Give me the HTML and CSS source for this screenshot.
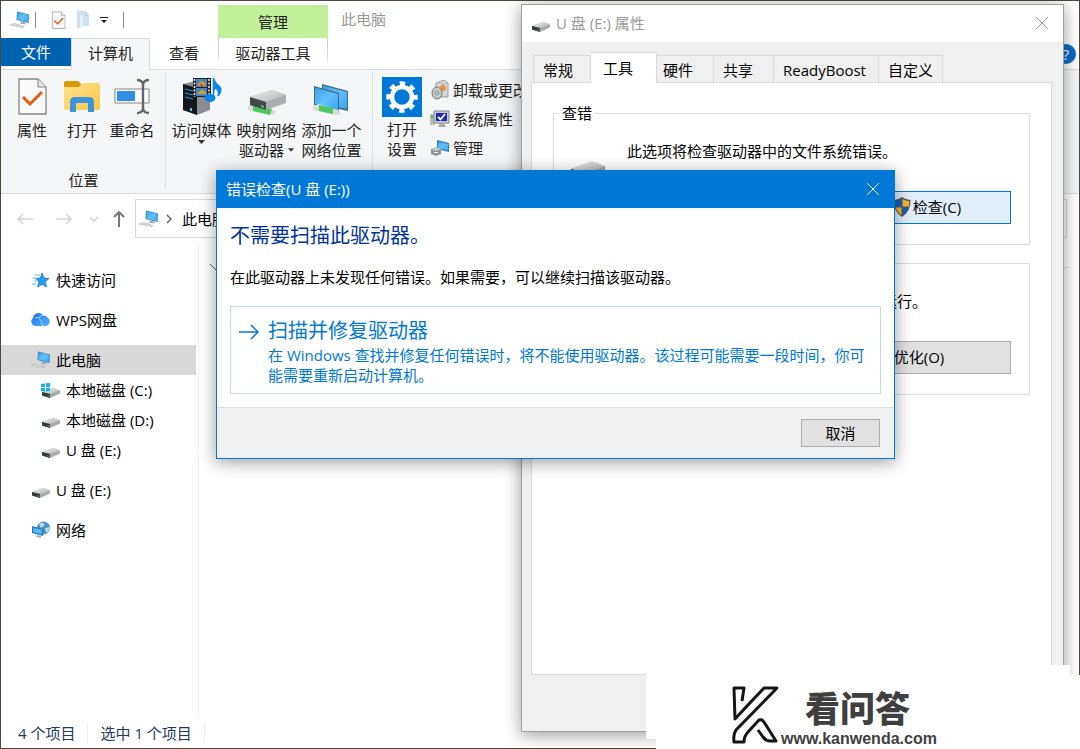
FILE: index.html
```html
<!DOCTYPE html>
<html lang="zh-CN">
<head>
<meta charset="utf-8">
<meta name="viewport" content="width=device-width, initial-scale=1">
<title>此电脑</title>
<link rel="stylesheet" href="styles.css">
</head>
<body class="desktop">
<svg class="defs" aria-hidden="true">
  <defs>
    <linearGradient id="screen" x1="0" y1="0" x2="1" y2="1"><stop offset="0" stop-color="#3aa0e8"/><stop offset=".5" stop-color="#62c0fb"/><stop offset="1" stop-color="#36a5f0"/></linearGradient>
    <linearGradient id="metal" x1="0" y1="0" x2="1" y2="1"><stop offset="0" stop-color="#f0f0f0"/><stop offset="1" stop-color="#aeb0b2"/></linearGradient>
    <linearGradient id="folder" x1="0" y1="0" x2="1" y2="1"><stop offset="0" stop-color="#ffe08a"/><stop offset="1" stop-color="#f9c84a"/></linearGradient>
    <linearGradient id="cloud" x1="0" y1="0" x2="1" y2="1"><stop offset="0" stop-color="#1b6ff2"/><stop offset="1" stop-color="#58b4fb"/></linearGradient>
    <symbol id="pc" viewBox="0 0 20 18">
      <path d="M7 0.500 19 3.500 18.500 12 6.500 9z" fill="#2f80b8"/><path d="M7.500 1.300 18.300 4 17.900 11.200 7.300 8.500z" fill="url(#screen)"/>
      <path d="M11 10.500 15 11.500 16 13.500 10 12.500z" fill="#9ba3a8"/>
      <path d="M0 14 4 12.500 12 14.500 9 16z" fill="#d5d8da" stroke="#b8bcbf" stroke-width=".6"/><path d="M11 16.500 14 15.500" stroke="#b0b4b7" stroke-width="1.200"/>
    </symbol>
    <symbol id="drive" viewBox="0 0 20 12">
      <path d="M1 5 12 1 19 3.500 19 6.500 9 11 1 8.500z" fill="#a7a9ab"/><path d="M1 5 12 1 19 3.500 9 7z" fill="url(#metal)"/>
      <path d="M1 5 9 7 9 11 1 8.500z" fill="#34383a"/><path d="M6.500 8.200 8.500 8.700V9.800L6.500 9.200z" fill="#35c765"/>
    </symbol>
    <symbol id="check" viewBox="0 0 30 38">
      <path d="M2 2H21L29 10V37H2z" fill="#fafafa" stroke="#858585" stroke-width="1.300"/><path d="M21 2V10H29" fill="#e6e6e6" stroke="#858585"/><path d="M6 20 13 27 25 15" fill="none" stroke="#ea5a17" stroke-width="3"/>
    </symbol>
  </defs>
</svg>

<main class="explorer">
  <header class="header">
    <div class="quick">
      <svg class="i20" viewBox="0 0 20 18"><use href="#pc"/></svg>
      <i class="bar"></i>
      <button class="plain" aria-label="属性"><svg width="15" height="18" viewBox="0 0 30 38"><use href="#check"/></svg></button>
      <button class="plain" aria-label="新建文件夹"><svg width="12" height="17" viewBox="0 0 12 17"><path d="M0 0H8L12 4V15H6L3 17H0z" fill="#cfe0f1"/><path d="M3 4H6V15L3 17z" fill="#e7f0f8"/><path d="M8 0V5H12" fill="#bfd6ec"/></svg></button>
      <button class="plain" aria-label="自定义快速访问工具栏"><svg width="8" height="6" viewBox="0 0 8 6"><path d="M0 0H8V1H0zM1 3H7L4 6z" fill="#222"/></svg></button>
      <i class="bar"></i>
    </div>
    <div class="context">管理</div>
    <h1 class="caption">此电脑</h1>
    <button class="tab file">文件</button>
    <button class="tab active">计算机</button>
    <button class="tab">查看</button>
    <button class="tab tools">驱动器工具</button>
    <div class="help-slot"><button class="help" aria-label="帮助">?</button></div>
  </header>

  <section class="ribbon">
    <div class="group place">
      <div class="tools-row">
        <button class="big"><svg width="30" height="38" viewBox="0 0 30 38"><use href="#check"/></svg>属性</button>
        <button class="big"><svg width="38" height="38" viewBox="0 0 38 38"><path d="M1 6Q1 4 3 4H15L18 7V11H1z" fill="#d99a07"/><path d="M1 10H16L20 6H35Q37 6 37 8V31Q37 33 35 33H3Q1 33 1 31z" fill="url(#folder)"/><path d="M7 35V25Q7 20 12 20H26Q31 20 31 25V35H25V26H13V35z" fill="#3b94dc"/></svg>打开</button>
        <button class="big"><svg width="38" height="38" viewBox="0 0 38 38"><path d="M2 12H36V26H2z" fill="#fff" stroke="#858585"/><path d="M4 14H22V24H4z" fill="#2f8fe3"/><path d="M24 3Q29 3 30 7Q31 3 36 3M30 5V34M24 36Q29 36 30 32Q31 36 36 36" fill="none" stroke="#666" stroke-width="2.400"/></svg>重命名</button>
      </div>
      <span class="group-name">位置</span>
    </div>
    <div class="group network">
      <div class="tools-row">
        <button class="big"><svg width="40" height="38" viewBox="0 0 40 38"><path d="M1 7 13 4 28 8V33L15 38 1 33z" fill="#8a8e92"/><path d="M1 7 15 11V38L1 33z" fill="#14181c"/><path d="M3 12 11 14M3 16 11 18M3 20 11 22" stroke="#2695f0"/><path d="M9 31V34" stroke="#4cf" stroke-width="2"/><path d="M11 1H29V20H11z" fill="#222"/><path d="M14 2H25V10H14zM14 11H25V19H14z" fill="#4b7fc8"/><path d="M15 8 19 4 24 6 22 10zM15 17 20 12 25 17z" fill="#c9a52e"/><path d="M18 6 22 9 19 10z" fill="#b5402c"/><path d="M12.500 2V20M27 2V20" stroke="#eee" stroke-width="1.500" stroke-dasharray="2 1.500"/><ellipse cx="28" cy="21" rx="5.500" ry="4" fill="#0c86e4"/><path d="M31.500 21V1Q33 7 37 9Q41 13 36 19Q38 13 33 11" fill="#0c86e4" stroke="#0c86e4" stroke-width="1.500"/></svg>访问媒体<svg width="7" height="4" viewBox="0 0 7 4"><path d="M0 0H7L3.500 4z" fill="#333"/></svg></button>
        <button class="big"><svg width="42" height="38" viewBox="0 0 42 38"><path d="M2 29 8 27 30 34 28 38 20 37 2 33z" fill="#d6dcd8"/><path d="M7 27 26 32 24 38 7 34z" fill="#4bc95c"/><path d="M4 20 26 13 40 18V26L20 33 4 28z" fill="#aaadaf"/><path d="M4 20 26 13 40 18 20 25z" fill="url(#metal)"/><path d="M4 20 20 25V33L4 28z" fill="#45494b"/><path d="M15 28 18 29V31L15 30z" fill="#40d660"/></svg>映射网络<span class="with-arrow">驱动器<svg width="6" height="4" viewBox="0 0 7 4"><path d="M0 0H7L3.500 4z" fill="#333"/></svg></span></button>
        <button class="big"><svg width="38" height="38" viewBox="0 0 38 38"><path d="M9 7 35 14V34L9 28z" fill="#3d6a86"/><path d="M10 8.500 34 15V32L10 27z" fill="url(#screen)"/><path d="M1 9 26 16V35L1 28z" fill="#3d6a86"/><path d="M2 10.500 25 17V33.500L2 27z" fill="url(#screen)"/><path d="M0 29 6 27 28 34 26 38 18 37 0 33z" fill="#d6dcd8"/><path d="M6 28 20 31 20 37 6 34z" fill="#4bc95c"/></svg>添加一个<span>网络位置</span></button>
      </div>
    </div>
    <div class="group system">
      <button class="big"><svg class="gear" width="40" height="40" viewBox="0 0 40 40"><path fill="#0078d7" d="M0 0H40V40H0z"/><circle cx="20" cy="20" r="13.500" fill="none" stroke="#fff" stroke-width="4.500" stroke-dasharray="5.300 5.303" stroke-dashoffset="2.650"/><circle cx="20" cy="20" r="10" fill="none" stroke="#fff" stroke-width="4.500"/></svg>打开<span>设置</span></button>
      <div class="small-list">
        <button class="small"><svg class="i20" viewBox="0 0 20 20"><path d="M6 3 14 0 18 3V17H6z" fill="#d8d8d4" stroke="#999"/><path d="M6 3 14 5 18 3" fill="#bbb"/><circle cx="13" cy="8" r="3" fill="#ee9138"/><ellipse cx="7" cy="13" rx="5" ry="6" fill="#c3c9c9" stroke="#777"/><circle cx="7" cy="13" r="1.500" fill="#fff" stroke="#777"/></svg>卸载或更改程序</button>
        <button class="small"><svg class="i20" viewBox="0 0 20 20"><path d="M0 5H5V16H0z" fill="#bbb"/><path d="M1 7H3V9H1z" fill="#2c4"/><path d="M4 2H19V14H4z" fill="#c9ccce" stroke="#888"/><path d="M6 4H17V12H6z" fill="#1b29c4"/><path d="M8 8 10.500 10.500 15 5" fill="none" stroke="#fff" stroke-width="1.800"/><path d="M10 14H14L16 18H8z" fill="#aaa"/></svg>系统属性</button>
        <button class="small"><svg class="i20" viewBox="0 0 20 20"><path d="M7 2 19 5V14L7 11z" fill="#2f80b8"/><path d="M8 3.500 18 6V12.500L8 10z" fill="url(#screen)"/><path d="M1 11 6 9 11 11V16L6 18 1 16z" fill="#8e9498"/><path d="M1 11 6 9 11 11 6 13z" fill="#c4c9cc"/><path d="M4 14.500H8" stroke="#eee"/></svg>管理</button>
      </div>
    </div>
  </section>

  <nav class="nav">
    <button class="plain" aria-label="后退"><svg width="16" height="12" viewBox="0 0 16 12"><path d="M16 6H1M6 1 1 6 6 11" fill="none" stroke="#d5d5d5" stroke-width="1.500"/></svg></button>
    <button class="plain forward" aria-label="前进"><svg width="16" height="12" viewBox="0 0 16 12"><path d="M0 6H15M10 1 15 6 10 11" fill="none" stroke="#d5d5d5" stroke-width="1.500"/></svg></button>
    <button class="plain recent" aria-label="最近浏览的位置"><svg width="10" height="6" viewBox="0 0 10 6"><path d="M1 1 5 5 9 1" fill="none" stroke="#d0d0d0" stroke-width="1.500"/></svg></button>
    <button class="plain" aria-label="上移"><svg width="12" height="16" viewBox="0 0 12 16"><path d="M6 16V1M1 6 6 1 11 6" fill="none" stroke="#777" stroke-width="2"/></svg></button>
    <div class="address"><svg class="i20" viewBox="0 0 20 18"><use href="#pc"/></svg><svg width="6" height="10" viewBox="0 0 6 10"><path d="M1 1 5 5 1 9" fill="none" stroke="#666" stroke-width="1.500"/></svg><span>此电脑</span></div>
    <input class="search" type="search" aria-label="搜索">
  </nav>

  <div class="content">
    <aside class="sidebar">
      <a class="item" href="#"><svg class="i20" viewBox="0 0 20 18"><path d="M11 2 13 7 18 7.300 14.200 11 15.500 16 11 13.300 6.500 16 8 11 5 7.500 9.300 7z" fill="#2b9df0" stroke="#1474c4" stroke-width=".8"/><path d="M4 4H9M2 7H5M3 10H6M1 13H5" stroke="#63b9f5"/></svg>快速访问</a>
      <a class="item" href="#"><svg class="i20" viewBox="0 0 20 18"><path d="M5 15A4.500 4.500 0 0 1 2 7A5.500 5.500 0 0 1 12 4.500A5 5 0 0 1 17 7A4.500 4.500 0 0 1 15 15z" fill="url(#cloud)"/><path d="M4 7Q8 5 10 10L12 15M12 4.500Q9 5 8 7" fill="none" stroke="#b9ddff" stroke-width=".9"/></svg>WPS网盘</a>
      <div class="tree">
        <a class="item selected" href="#"><svg class="i20" viewBox="0 0 20 18"><use href="#pc"/></svg>此电脑</a>
        <a class="item child" href="#"><svg class="i20" viewBox="0 0 20 18"><use href="#drive" y="6" width="20" height="12"/><path d="M0 3 4 2.500V6H0zM5 2.300 9 2V6H5zM0 7H4V10.500L0 10zM5 7H9V10L5 10.500z" fill="#12b2f0"/></svg>本地磁盘 (C:)</a>
        <a class="item child" href="#"><svg class="i20" viewBox="0 0 20 18"><use href="#drive" y="6" width="20" height="12"/></svg>本地磁盘 (D:)</a>
        <a class="item child" href="#"><svg class="i20" viewBox="0 0 20 18"><use href="#drive" y="6" width="20" height="12"/></svg>U 盘 (E:)</a>
      </div>
      <a class="item" href="#"><svg class="i20" viewBox="0 0 20 18"><use href="#drive" y="6" width="20" height="12"/></svg>U 盘 (E:)</a>
      <a class="item" href="#"><svg class="i20" viewBox="0 0 20 18"><circle cx="12.500" cy="7" r="6.500" fill="#4b8fc6"/><path d="M8 3Q12 0 14 4L10 7zM14 7 19 6Q18 11 15 12z" fill="#b9dcf2"/><path d="M1 5 12 8V15L1 12z" fill="#2878b4"/><path d="M2 6.500 11 9V13.500L2 11z" fill="url(#screen)"/><path d="M6 14 10 15V17L5 16z" fill="#aab0b4"/></svg>网络</a>
    </aside>
    <section class="files">
      <svg width="12" height="7" viewBox="0 0 12 7"><path d="M0 0 6 6 12 0" fill="none" stroke="#555"/></svg><i class="rule"></i>
    </section>
  </div>
  <footer class="status"><span>4 个项目</span><span>选中 1 个项目</span></footer>
</main>

<section class="window properties" aria-label="U 盘 (E:) 属性">
  <header class="window-title"><svg width="20" height="12" viewBox="0 0 20 12"><use href="#drive"/></svg><h2>U 盘 (E:) 属性</h2><button class="close" aria-label="关闭"><svg width="14" height="14" viewBox="0 0 14 14"><path d="M1 1 13 13M13 1 1 13" stroke="currentColor"/></svg></button></header>
  <div class="prop-body">
    <div class="prop-tabs" role="tablist">
      <button role="tab">常规</button><button role="tab" class="on" aria-selected="true">工具</button><button role="tab">硬件</button><button role="tab">共享</button><button role="tab">ReadyBoost</button><button role="tab">自定义</button>
    </div>
    <div class="panel">
      <fieldset class="box">
        <legend>查错</legend>
        <svg width="38" height="24" viewBox="0 0 20 12"><use href="#drive"/></svg>
        <p>此选项将检查驱动器中的文件系统错误。</p>
        <button class="push focus"><svg width="18" height="20" viewBox="0 0 18 20"><path d="M9 0Q13 3 17.500 3Q18 14 9 20Q0 14 .5 3Q5 3 9 0z" fill="#555"/><path d="M8.500 2V9.500H2L1.800 4.200Q5.500 4 8.500 2zM9.500 10.500H15.500Q14 15 9.500 18.200z" fill="#0c63c4"/><path d="M9.500 2V9.500H16L16.200 4.200Q12.500 4 9.500 2zM8.500 10.500H2.500Q4 15 8.500 18.200z" fill="#f6b62b"/></svg>检查(C)</button>
      </fieldset>
      <fieldset class="box plain-box">
        <p>优化计算机的驱动器可以帮助其更高效运行。</p>
        <button class="push">优化(O)</button>
      </fieldset>
    </div>
  </div>
</section>

<section class="window dialog" role="dialog" aria-labelledby="dialog-title">
  <header class="window-title"><h2 id="dialog-title">错误检查(U 盘 (E:))</h2><button class="close" aria-label="关闭"><svg width="14" height="14" viewBox="0 0 14 14"><path d="M1 1 13 13M13 1 1 13" stroke="currentColor"/></svg></button></header>
  <div class="dialog-body">
    <h3>不需要扫描此驱动器。</h3>
    <p>在此驱动器上未发现任何错误。如果需要，可以继续扫描该驱动器。</p>
    <button class="command"><svg width="20" height="16" viewBox="0 0 20 16"><path d="M0 8H19M12 1 19 8 12 15" fill="none" stroke="#0078d7" stroke-width="1.500"/></svg><span class="command-text"><strong>扫描并修复驱动器</strong><span>在 Windows 查找并修复任何错误时，将不能使用驱动器。该过程可能需要一段时间，你可能需要重新启动计算机。</span></span></button>
  </div>
  <footer class="dialog-foot"><button class="cancel">取消</button></footer>
</section>

<div class="watermark">
  <svg width="50" height="64" viewBox="0 0 50 64"><path d="M12 17 14 4H4L5 35Q15 24 34 4H47L6 46Q3 50 4 58H14Q14 52 18 48L29 36Q32 35 34 38L46 57H40Q36 57 33 53L28 46" fill="none" stroke="#151515" stroke-width="3" stroke-linejoin="round"/></svg>
  <div class="brand"><strong>看问答</strong><span>www.kanwenda.com</span></div>
</div>
</body>
</html>
```
FILE: styles.css
```css
* { box-sizing: border-box; }

body, h1, h2, h3, p, fieldset { margin: 0; font-weight: 400; }

.desktop {
  height: 100vh;
  padding: 1px;
  overflow: hidden;
  background: #504a3c;
  color: #000;
  font: 15px/20px "Open Sans", "Noto Sans CJK SC", sans-serif;
}

button, input { font: inherit; color: inherit; padding: 0; margin: 0; border: 0; border-radius: 0; background: none; }
svg { flex: none; display: block; }
h1, h2 { font-size: 15px; }
.defs { position: absolute; width: 0; height: 0; }
.i20 { width: 20px; height: 18px; }
.plain { display: flex; align-items: center; }

/* Explorer window */
.explorer { display: flex; flex-direction: column; height: 100%; background: #fff; }

.header {
  display: grid;
  grid-template-columns: 70px 79px 68px 110px 1fr;
  grid-template-rows: 37px 32px;
  background: linear-gradient(#dadbdc, #dadbdc) bottom / 100% 1px no-repeat;
}
.quick { grid-column: 1 / 4; display: flex; align-items: center; padding-left: 9px; gap: 15px; }
.quick .i20 { margin-right: -10px; }
.quick .plain + .plain { margin-left: -4px; }
.bar { width: 1px; height: 16px; background: #8a8a8a; }
.context { display: grid; place-items: center; margin-top: 4px; background: #c2f09b; color: #222; }
.caption { padding: 8px 13px; color: #999; }
.tab { color: #222; padding-bottom: 3px; }
.file { height: 28px; padding: 0; background: #0063b1; color: #fff; }
.active { background: #f5f6f7; border: 1px solid #dadbdc; border-bottom: 0; }
.tools { border: solid; border-width: 0 1px; border-image: linear-gradient(#ccc, #ddd 60%, transparent 80%) 1; }
.help-slot { display: flex; justify-content: flex-end; align-items: center; padding-right: 3px; }
.help { width: 20px; height: 20px; border-radius: 50%; background: #0b6cc9; color: #fff; }

.ribbon { display: flex; height: 124px; background: #f5f6f7; border-bottom: 1px solid #dadbdc; color: #222; }
.group { padding: 7px 6px 0; background: linear-gradient(#dfe0e1, #dfe0e1) right 2px / 1px 118px no-repeat; }
.place { width: 165px; display: flex; flex-direction: column; }
.network { width: 207px; padding-left: 3px; }
.tools-row { display: flex; }
.place .big { flex: 0 0 50px; }
.big { display: flex; flex-direction: column; align-items: center; flex: 0 0 65px; white-space: nowrap; }
.big > svg:first-child { margin-bottom: 5px; }
.with-arrow { display: flex; align-items: center; gap: 4px; }
.group-name { text-align: center; margin-top: 30px; }
.system { display: flex; flex: 1; background: none; padding: 7px 0 0 1px; }
.system .big { flex: 0 0 56px; justify-content: flex-start; }
.big .gear { margin-bottom: 3px; }
.system .big .gear { margin-bottom: 2px; }
.small-list { display: flex; flex-direction: column; gap: 9px; padding-top: 3px; }
.small { display: flex; align-items: center; gap: 3px; white-space: nowrap; }
.small .i20 { height: 20px; }

.nav { display: flex; align-items: center; height: 51px; padding: 0 12px 2px 16px; }
.forward { margin-left: 23px; }
.recent { margin: 0 14px 0 17px; }
.address { display: flex; align-items: center; gap: 7px; flex: 1; height: 39px; margin-left: 10px; padding-left: 3px; border: 1px solid #d9d9d9; }
.address span { margin-left: 3px; }
.search { width: 260px; height: 39px; margin-left: 12px; border: 1px solid #d9d9d9; }

.content { display: flex; flex: 1; }
.sidebar { display: flex; flex-direction: column; gap: 10px; width: 198px; padding: 20px 2px 0 0; border-right: 1px solid #f0f0f0; }
.item { display: flex; align-items: center; gap: 5px; height: 30px; padding-left: 30px; color: #000; text-decoration: none; }
.child { padding-left: 40px; }
.selected { background: #d9d9d9; }
.files { display: flex; flex: 1; gap: 12px; padding: 19px 8px 0 11px; }
.rule { flex: 1; height: 1px; margin-top: 3px; background: #e2e2e2; }
.status { display: flex; align-items: center; height: 30px; padding-left: 17px; color: #1e395b; }
.status span { padding-right: 12px; margin-right: 12px; border-right: 1px solid #eee; }

/* Windows placed on the desktop */
.window { position: absolute; display: flex; flex-direction: column; background: #f0f0f0; box-shadow: 0 3px 16px rgba(0, 0, 0, .4); }
.window-title { display: flex; align-items: center; height: 37px; flex: none; padding-bottom: 1px; }
.close { display: grid; place-items: center; margin-left: auto; }

.properties { left: 521px; right: 16px; top: 4px; bottom: 17px; border: 1px solid #a0a0a0; }
.properties .window-title { padding: 0 14px 1px 9px; gap: 5px; background: #fff; color: #999; }
.properties .window-title > svg { margin-top: 8px; }
.prop-body { display: flex; flex-direction: column; flex: 1; padding: 10px 11px 56px 9px; }
.prop-tabs { display: flex; align-items: flex-end; height: 31px; padding-left: 2px; margin-bottom: -1px; }
.prop-tabs button { height: 28px; padding: 2px 9px 0; border: 1px solid #d9d9d9; border-left-width: 0; text-align: left; white-space: nowrap; }
.prop-tabs button:first-child { border-left-width: 1px; min-width: 58px; }
.prop-tabs button:nth-child(3) { min-width: 57px; padding-left: 6px; }
.prop-tabs button:nth-child(4) { min-width: 60px; }
.prop-tabs button:nth-child(5) { min-width: 105px; }
.prop-tabs .on { height: 31px; min-width: 66px; padding: 0 12px 1px; background: #fff; border-bottom: 0; z-index: 1; }
.panel { flex: 1; padding: 20px 21px; background: #fff; border: 1px solid #d9d9d9; }
.box { display: grid; grid-template-columns: 58px 1fr; row-gap: 30px; padding: 18px 18px 20px 15px; border: 1px solid #dcdcdc; }
.box legend { padding: 0 2px; margin-left: -9px; }
.box svg { align-self: start; }
.box > svg { margin-top: 18px; margin-bottom: -22px; }
.box p { grid-column: 2; }
.push { grid-column: 2; justify-self: end; display: flex; align-items: center; justify-content: center; gap: 2px; width: 184px; height: 33px; padding-bottom: 1px; background: #e1e1e1; border: 1px solid #adadad; }
.focus { padding-left: 16px; background: #e0eefa; border-color: #0078d7; }
.focus svg { align-self: center; }
.plain-box { margin-top: 18px; padding-top: 27px; }

.dialog { left: 216px; top: 170px; width: 679px; border: 1px solid #0078d7; }
.dialog .window-title { padding: 0 14px 1px 9px; background: #0078d7; color: #fff; }
.dialog-body { padding: 15px 13px 13px; background: #fff; border-bottom: 1px solid #dfdfdf; }
.dialog-body h3 { color: #039; font-size: 20px; line-height: 26px; }
.dialog-body p { margin: 18px 0 19px; }
.command { display: flex; width: 100%; gap: 9px; padding: 10px 10px 8px 8px; border: 1px solid #bcdcf4; color: #0078d7; text-align: left; }
.command > svg { margin-top: 7px; }
.command-text { display: flex; flex-direction: column; }
.command strong { font-size: 20px; font-weight: 400; line-height: 28px; }
.dialog-foot { display: flex; justify-content: flex-end; padding: 11px 14px 11px; }
.cancel { width: 79px; height: 28px; padding-bottom: 1px; background: #e1e1e1; border: 1px solid #adadad; }

/* Site mark over the lower right corner */
.watermark { position: absolute; left: 656px; right: 0; bottom: 0; height: 74px; display: flex; padding: 9px 0 0 74px; background: #fff; isolation: isolate; }
.watermark::before { content: ""; position: absolute; left: -10px; right: 10px; top: -10px; height: 74px; background: #fff; z-index: -1; }
.brand { display: flex; flex-direction: column; color: #3f3f3f; padding-left: 1px; }
.brand strong { padding-left: 24px; font: 900 35px/45px "Noto Sans CJK SC", sans-serif; }
.brand span { font: 700 16px/20px "Liberation Sans", sans-serif; }
```
